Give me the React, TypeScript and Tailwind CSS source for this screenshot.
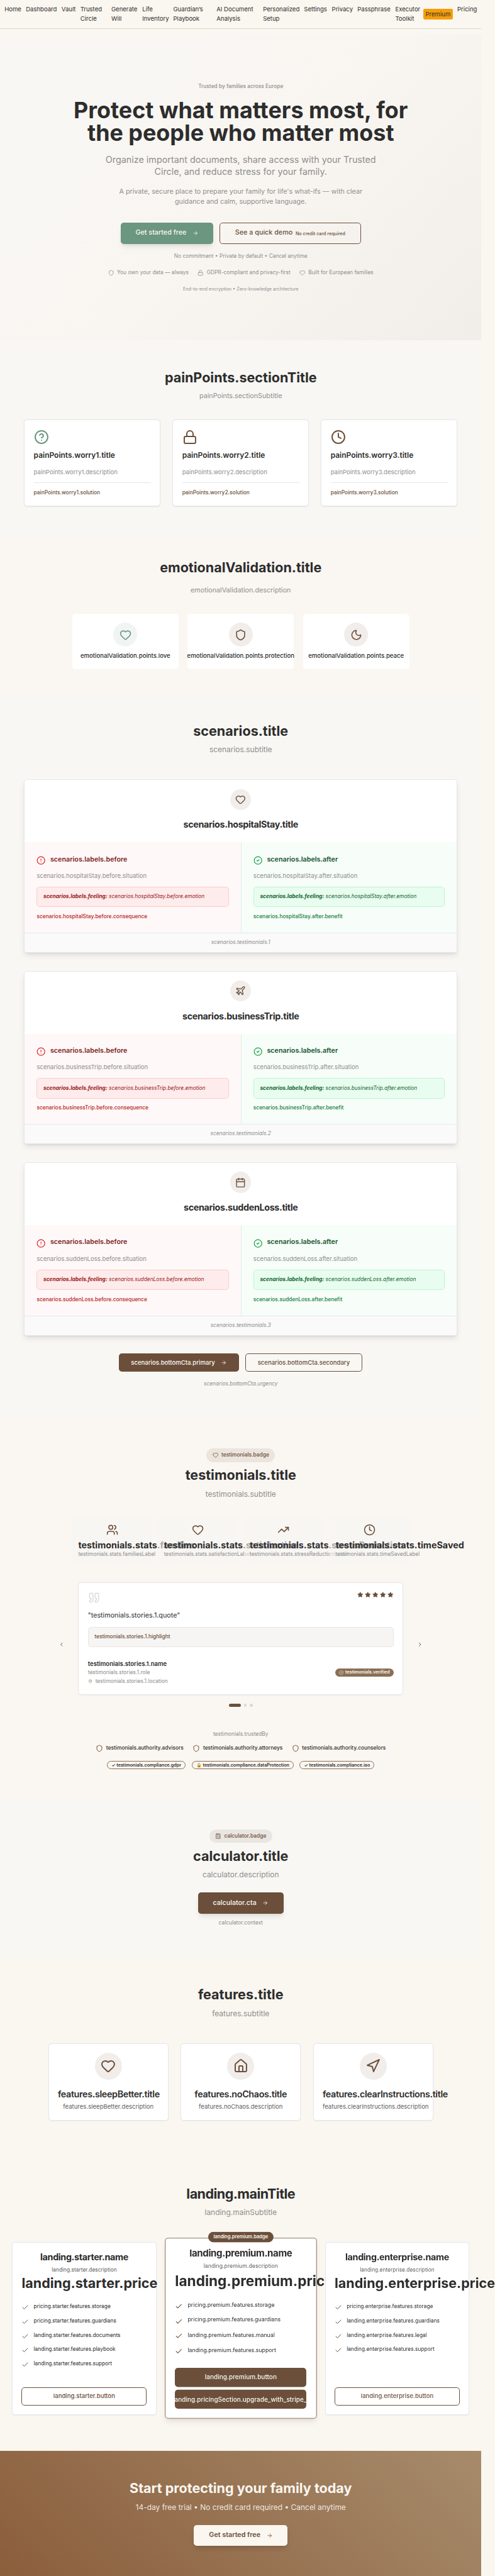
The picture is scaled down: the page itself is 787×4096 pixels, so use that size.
import type { ReactNode } from "react";
import {
  ArrowRight,
  Calculator,
  Calendar,
  Check,
  ChevronLeft,
  ChevronRight,
  CircleAlert,
  CircleCheck,
  CircleCheckBig,
  CircleHelp,
  Clock,
  Heart,
  House,
  Lock,
  MapPin,
  Moon,
  Navigation,
  Plane,
  Quote,
  Shield,
  Star,
  TrendingUp,
  Users,
  type LucideIcon,
} from "lucide-react";

const navItems: { label: string; width: string; badge?: string }[] = [
  { label: "Home", width: "w-[2.8rem]" },
  { label: "Dashboard", width: "w-[5.175rem]" },
  { label: "Vault", width: "w-[2.375rem]" },
  { label: "Trusted Circle", width: "w-[4.4rem]" },
  { label: "Generate Will", width: "w-[4.4rem]" },
  { label: "Life Inventory", width: "w-[4.4rem]" },
  { label: "Guardian’s Playbook", width: "w-[6.44rem]" },
  { label: "AI Document Analysis", width: "w-[6.97rem]" },
  { label: "Personalized Setup", width: "w-[6.06rem]" },
  { label: "Settings", width: "w-[3.875rem]" },
  { label: "Privacy", width: "w-[3.5rem]" },
  { label: "Passphrase", width: "w-[5.55rem]" },
  { label: "Executor Toolkit", width: "w-[4.15rem]", badge: "Premium" },
  { label: "Pricing", width: "w-[3.5rem]" },
];

function NavBar() {
  return (
    <nav className="mb-4 flex h-[4.7625rem] items-start gap-3 border-b border-[#dddad6] p-3 text-base leading-[1.6] text-[#2d2d2d]">
      {navItems.map((item) => (
        <div key={item.label} className="flex shrink-0 items-center">
          <a className={item.width}>{item.label}</a>
          {item.badge && (
            <span className="ml-2 flex w-[4.9rem] justify-center rounded-sm bg-[#f59e0b] py-0.5">{item.badge}</span>
          )}
        </div>
      ))}
    </nav>
  );
}

function Hero() {
  const points: [LucideIcon, string][] = [
    [Shield, "You own your data — always"],
    [Lock, "GDPR-compliant and privacy-first"],
    [Heart, "Built for European families"],
  ];
  return (
    <section className="flex h-203 flex-col items-center bg-[linear-gradient(135deg,#f8f7f3_0%,#f9f6f2_50%,#f1eeea_100%)] pt-32 text-center text-[#8e8e8c]">
      <p className="text-sm font-medium">Trusted by families across Europe</p>
      <h1 className="mt-6 w-240 text-6xl leading-none font-bold text-[#2d2d2d]">
        Protect what matters most, for
        <br />
        the people who matter most
      </h1>
      <p className="mt-6 w-192 text-2xl">
        Organize important documents, share access with your Trusted Circle, and reduce stress for your family.
      </p>
      <p className="mt-6 w-168 text-lg leading-7">
        A private, secure place to prepare your family for life's what-ifs — with clear guidance and calm, supportive
        language.
      </p>
      <div className="mt-10 flex gap-4">
        <button className="flex h-14 items-center rounded-lg bg-[#6b9680] px-10 text-lg font-medium text-[#faf8f4] shadow-[0_0.6rem_0.95rem_-0.2rem_#0000001a,0_0.25rem_0.4rem_-0.25rem_#0000001a]">
          Get started free
          <ArrowRight className="ml-4 size-4" />
        </button>
        <button className="flex h-14 items-center rounded-lg border-[0.125rem] border-[#6b4f3a] px-10 text-lg font-medium text-[#6b4f3a]">
          See a quick demo
          <span className="ml-2 pt-1 text-xs font-medium">No credit card required</span>
        </button>
      </div>
      <p className="mt-6 text-sm">No commitment • Private by default • Cancel anytime</p>
      <div className="mt-6 flex gap-6">
        {points.map(([Icon, text]) => (
          <div key={text} className="flex items-center gap-2 text-sm">
            <Icon className="size-4" />
            {text}
          </div>
        ))}
      </div>
      <p className="mt-6 text-xs">End-to-end encryption • Zero-knowledge architecture</p>
    </section>
  );
}

function Heading({
  title,
  subtitle,
  large,
  tight,
}: {
  title: string;
  subtitle: string;
  large?: boolean;
  tight?: boolean;
}) {
  return (
    <div className="text-center">
      <h2
        className={
          tight ? "text-4xl font-bold tracking-tight text-[#2d2d2d]" : "text-4xl font-bold text-[#2d2d2d]"
        }
      >
        {title}
      </h2>
      <p className={large ? "mt-4 text-xl text-[#8e8e8c]" : "mt-4 text-lg leading-7 text-[#8e8e8c]"}>{subtitle}</p>
    </div>
  );
}

function PainPoints() {
  const cards: [string, LucideIcon, string][] = [
    ["worry1", CircleHelp, "text-[#6b9680]"],
    ["worry2", Lock, "text-[#6b4f3a]"],
    ["worry3", Clock, "text-[#6b4f3a]"],
  ];
  return (
    <section className="h-[32.65rem] bg-[#f8f7f3] px-16 pt-20">
      <Heading title="painPoints.sectionTitle" subtitle="painPoints.sectionSubtitle" />
      <div className="mt-12 grid grid-cols-3 gap-8">
        {cards.map(([key, Icon, color]) => (
          <div
            key={key}
            className="h-[14.4rem] rounded-lg border-[0.125rem] border-[#e5e7eb] bg-white p-6 shadow-[0_0.06rem_0.15rem_#00000014]"
          >
            <Icon className={`size-10 ${color}`} />
            <h3 className="mt-4 text-xl font-semibold text-[#2d2d2d]">{`painPoints.${key}.title`}</h3>
            <p className="mt-4 text-base leading-[1.6] text-[#8e8e8c]">{`painPoints.${key}.description`}</p>
            <p className="mt-4 border-t border-[#e5e7eb] pt-4 text-sm font-medium text-[#6b4f3a]">
              {`painPoints.${key}.solution`}
            </p>
          </div>
        ))}
      </div>
    </section>
  );
}

function EmotionalValidation() {
  const cards: [string, LucideIcon, string][] = [
    ["love", Heart, "bg-[#f0f4f2] text-[#6b9680]"],
    ["protection", Shield, "bg-[#f1edea] text-[#6b4f3a]"],
    ["peace", Moon, "bg-[#f1edea] text-[#6b4f3a]"],
  ];
  return (
    <section className="h-[26.1rem] bg-[#faf6f2] px-48 pt-16">
      <h2 className="text-center text-4xl font-bold text-[#2d2d2d]">emotionalValidation.title</h2>
      <p className="mt-6 text-center text-lg leading-[1.625] text-[#8e8e8c]">emotionalValidation.description</p>
      <div className="mt-12 grid grid-cols-3 gap-6">
        {cards.map(([key, Icon, tone]) => (
          <div key={key} className="flex min-w-0 flex-col items-center rounded-lg bg-white p-6">
            <div className={`flex size-16 items-center justify-center rounded-full ${tone}`}>
              <Icon className="size-8" />
            </div>
            <p className="mt-3 text-base font-medium text-[#2d2d2d]">{`emotionalValidation.points.${key}`}</p>
          </div>
        ))}
      </div>
    </section>
  );
}

function Outcome({ scenario, after }: { scenario: string; after?: boolean }) {
  const phase = after ? "after" : "before";
  const Icon = after ? CircleCheck : CircleAlert;
  return (
    <div className={after ? "border-l border-[#e3ece6] bg-[#f7fdf9] p-8" : "bg-[#fef8f8] p-8"}>
      <div className="flex items-start gap-3">
        <Icon className={after ? "mt-1 size-6 text-[#16a34a]" : "mt-1 size-6 text-[#dc2626]"} />
        <h4
          className={
            after ? "text-lg leading-7 font-semibold text-[#14532d]" : "text-lg leading-7 font-semibold text-[#7f1d1d]"
          }
        >
          {`scenarios.labels.${phase}`}
        </h4>
      </div>
      <p className="mt-4 text-base leading-[1.625] text-[#8e8e8c]">{`scenarios.${scenario}.${phase}.situation`}</p>
      <p
        className={
          after
            ? "mt-4 flex h-[3.375rem] items-center rounded-lg border border-[#bbf7d0] bg-[#e8fdef] px-4 text-sm text-[#166534] italic"
            : "mt-4 flex h-[3.375rem] items-center rounded-lg border border-[#fecaca] bg-[#feecec] px-4 text-sm text-[#991b1b] italic"
        }
      >
        <span>
          <strong className="font-bold">scenarios.labels.feeling:</strong> {`scenarios.${scenario}.${phase}.emotion`}
        </span>
      </p>
      <p className={after ? "mt-4 text-sm font-medium text-[#15803d]" : "mt-4 text-sm font-medium text-[#b91c1c]"}>
        {`scenarios.${scenario}.${phase}.${after ? "benefit" : "consequence"}`}
      </p>
    </div>
  );
}

function Scenarios() {
  const cards: [string, LucideIcon][] = [
    ["hospitalStay", Heart],
    ["businessTrip", Plane],
    ["suddenLoss", Calendar],
  ];
  return (
    <section className="h-[120.4375rem] bg-[#f8f7f3] px-16 pt-20">
      <Heading title="scenarios.title" subtitle="scenarios.subtitle" large />
      <div className="mt-16 flex flex-col gap-12">
        {cards.map(([key, Icon], index) => (
          <article
            key={key}
            className="flex h-[28.8125rem] flex-col overflow-hidden rounded-lg border border-[#e5e7eb] bg-white shadow-[0_0.6rem_0.95rem_-0.2rem_#0000001a,0_0.25rem_0.4rem_-0.25rem_#0000001a]"
          >
            <div className="flex h-[10.375rem] shrink-0 flex-col items-center pt-6">
              <div className="flex size-14 items-center justify-center rounded-full bg-[#f1edea] text-[#6b4f3a]">
                <Icon className="size-7" />
              </div>
              <h3 className="mt-5.5 text-2xl font-bold tracking-tight text-[#2d2d2d]">{`scenarios.${key}.title`}</h3>
            </div>
            <div className="grid h-60 shrink-0 grid-cols-2">
              <Outcome scenario={key} />
              <Outcome scenario={key} after />
            </div>
            <p className="flex grow items-center justify-center border-t border-[#e2e8f0] bg-[#fafafa] text-sm text-[#8e8e8c] italic">
              {`scenarios.testimonials.${index + 1}`}
            </p>
          </article>
        ))}
      </div>
      <div className="mt-12 flex justify-center gap-4">
        <button className="flex h-12 items-center rounded-lg bg-[#6b4f3a] px-8 text-base font-medium text-[#faf8f4]">
          scenarios.bottomCta.primary
          <ArrowRight className="ml-4 size-4" />
        </button>
        <button className="flex h-12 items-center rounded-lg border border-[#6b4f3a] px-8 text-base font-medium text-[#6b4f3a]">
          scenarios.bottomCta.secondary
        </button>
      </div>
      <p className="mt-6 text-center text-sm text-[#8e8e8c] italic">scenarios.bottomCta.urgency</p>
    </section>
  );
}

function Badge({ icon: Icon, children }: { icon: LucideIcon; children: ReactNode }) {
  return (
    <div className="mx-auto mb-4 flex h-9 w-fit items-center gap-2 rounded-full bg-[#6b4f3a]/10 px-4 text-sm font-medium text-[#6b4f3a]">
      <Icon className="size-4" />
      {children}
    </div>
  );
}

function Testimonials() {
  const stats: [string, LucideIcon][] = [
    ["families", Users],
    ["satisfaction", Heart],
    ["stressReduction", TrendingUp],
    ["timeSaved", Clock],
  ];
  return (
    <section className="h-[63.3125rem] bg-[#faf6f1] px-48 pt-20">
      <Badge icon={Heart}>testimonials.badge</Badge>
      <Heading title="testimonials.title" subtitle="testimonials.subtitle" large />
      <div className="mt-12 grid grid-cols-4 gap-4">
        {stats.map(([key, Icon]) => (
          <div key={key} className="relative h-31 min-w-0 rounded-lg bg-[#f7f6f5]/60 p-4">
            <Icon className="mx-auto size-8 text-[#6b4f3a]" />
            <p className="mt-2 text-2xl font-bold text-[#2d2d2d]">{`testimonials.stats.${key}`}</p>
            <p className="text-sm text-[#8e8e8c]">{`testimonials.stats.${key}Label`}</p>
          </div>
        ))}
      </div>

      <div className="mt-12 flex items-center justify-between">
        <div className="-ml-12 flex size-10 shrink-0 items-center justify-center">
          <ChevronLeft className="size-4 text-[#2d2d2d]" />
        </div>
        <div className="w-216 shrink-0">
          <article className="h-[18.6875rem] rounded-lg border border-[#e8e6e6] bg-white p-6 shadow-[0_0.06rem_0.12rem_#0000000d]">
            <div className="flex items-start justify-between">
              <Quote className="size-8 text-[#6b4f3a]/20" />
              <div className="flex gap-1 text-[#6b4f3a]">
                {[1, 2, 3, 4, 5].map((n) => (
                  <Star key={n} className="size-4 fill-current" />
                ))}
              </div>
            </div>
            <p className="mt-4 text-lg leading-[1.625] text-[#2d2d2d]">"testimonials.stories.1.quote"</p>
            <p className="mt-4 flex h-[3.375rem] items-center rounded-lg border border-[#e8e6e5] bg-[#f7f5f4] px-4 text-sm font-medium text-[#6b4f3a]">
              testimonials.stories.1.highlight
            </p>
            <div className="mt-8 flex items-center justify-between">
              <div className="text-sm text-[#8e8e8c]">
                <p className="text-base leading-[1.6] font-semibold text-[#2d2d2d]">testimonials.stories.1.name</p>
                <p>testimonials.stories.1.role</p>
                <p className="mt-1 flex items-center gap-2">
                  <MapPin className="size-3" />
                  testimonials.stories.1.location
                </p>
              </div>
              <span className="flex h-[1.375rem] items-center gap-1 rounded-full bg-[#8b6f55] px-2.5 text-xs font-semibold text-[#faf8f4]">
                <CircleCheckBig className="size-3" />
                testimonials.verified
              </span>
            </div>
          </article>
          <div className="mt-6 flex justify-center gap-2">
            <span className="h-2 w-8 rounded-full bg-[#6b4f3a]" />
            <span className="size-2 rounded-full bg-[#dad8d4]" />
            <span className="size-2 rounded-full bg-[#dad8d4]" />
          </div>
        </div>
        <div className="-mr-12 flex size-10 shrink-0 items-center justify-center">
          <ChevronRight className="size-4 text-[#2d2d2d]" />
        </div>
      </div>

      <p className="mt-16 text-center text-sm text-[#8e8e8c]">testimonials.trustedBy</p>
      <div className="mt-4 flex justify-center gap-6">
        {["advisors", "attorneys", "counselors"].map((key) => (
          <div key={key} className="flex items-center gap-2 text-sm font-medium text-[#2d2d2d]">
            <Shield className="size-5 text-[#6b4f3a]" />
            {`testimonials.authority.${key}`}
          </div>
        ))}
      </div>
      <div className="mt-6 flex justify-center gap-4 text-xs font-semibold text-[#2d2d2d]">
        {["✓ testimonials.compliance.gdpr", "🔒 testimonials.compliance.dataProtection", "✓ testimonials.compliance.iso"].map(
          (label) => (
            <span key={label} className="flex h-[1.375rem] items-center rounded-full border border-[#8b6f55] px-2.5">
              {label}
            </span>
          ),
        )}
      </div>
    </section>
  );
}

function CalculatorPromo() {
  return (
    <section className="h-105 bg-[#f8f7f3] pt-20">
      <Badge icon={Calculator}>calculator.badge</Badge>
      <Heading title="calculator.title" subtitle="calculator.description" large />
      <button className="mx-auto mt-8 flex h-14 items-center rounded-lg bg-[#6b4f3a] px-10 text-lg font-medium text-[#faf8f4] shadow-[0_0.6rem_0.95rem_-0.2rem_#0000001a,0_0.25rem_0.4rem_-0.25rem_#0000001a]">
        calculator.cta
        <ArrowRight className="ml-4 size-4" />
      </button>
      <p className="mt-4 text-center text-sm text-[#8e8e8c]">calculator.context</p>
    </section>
  );
}

function Features() {
  const cards: [string, LucideIcon][] = [
    ["sleepBetter", Heart],
    ["noChaos", House],
    ["clearInstructions", Navigation],
  ];
  return (
    <section className="h-[32.125rem] px-32 pt-20">
      <Heading title="features.title" subtitle="features.subtitle" large />
      <div className="mt-16 grid grid-cols-3 gap-8">
        {cards.map(([key, Icon]) => (
          <div
            key={key}
            className="h-[12.875rem] min-w-0 rounded-lg border border-[#e5e7eb] bg-white p-6 text-center shadow-[0_0.06rem_0.12rem_#0000000d]"
          >
            <div className="mx-auto flex size-18 items-center justify-center rounded-full bg-[#f1edea] text-[#6b4f3a]">
              <Icon className="size-10" />
            </div>
            <h3 className="mt-5.5 text-2xl font-semibold tracking-tight text-[#2d2d2d]">{`features.${key}.title`}</h3>
            <p className="mt-1.5 text-base text-[#5e5e5e]">{`features.${key}.description`}</p>
          </div>
        ))}
      </div>
    </section>
  );
}

type Plan = { key: string; features: string[]; featured?: boolean };

const plans: Plan[] = [
  {
    key: "starter",
    features: [
      "pricing.starter.features.storage",
      "pricing.starter.features.guardians",
      "landing.starter.features.documents",
      "landing.starter.features.playbook",
      "landing.starter.features.support",
    ],
  },
  {
    key: "premium",
    featured: true,
    features: [
      "pricing.premium.features.storage",
      "pricing.premium.features.guardians",
      "landing.premium.features.manual",
      "landing.premium.features.support",
    ],
  },
  {
    key: "enterprise",
    features: [
      "pricing.enterprise.features.storage",
      "landing.enterprise.features.guardians",
      "landing.enterprise.features.legal",
      "landing.enterprise.features.support",
    ],
  },
];

function PlanCard({ plan }: { plan: Plan }) {
  return (
    <article
      className={
        plan.featured
          ? "relative flex h-[28.6875rem] min-w-0 scale-105 flex-col rounded-lg border border-[#8f7a69] bg-white p-6 shadow-[0_0.6rem_0.95rem_-0.2rem_#6b4f3a22,0_0.25rem_0.4rem_-0.25rem_#6b4f3a1a]"
          : "relative flex h-[28.6875rem] min-w-0 flex-col rounded-lg border border-[#e2e8f0] bg-white p-6 shadow-[0_0.06rem_0.12rem_#0000000d]"
      }
    >
      {plan.featured && (
        <span className="absolute -top-4 left-1/2 flex h-6.5 -translate-x-1/2 items-center rounded-full bg-[#6b4f3a] px-3.5 text-xs font-semibold text-[#faf8f4]">
          landing.premium.badge
        </span>
      )}
      <h3 className="text-center text-2xl leading-7 font-bold tracking-tight text-[#2d2d2d]">{`landing.${plan.key}.name`}</h3>
      <p className="mt-2.5 text-center text-sm text-[#5e5e5e]">{`landing.${plan.key}.description`}</p>
      <p className="mt-1.5 text-center text-4xl font-bold text-[#2d2d2d]">{`landing.${plan.key}.price`}</p>
      <ul className="mt-8 flex flex-col gap-4">
        {plan.features.map((feature) => (
          <li key={feature} className="flex h-5.5 items-start gap-3 text-sm text-[#2d2d2d]">
            <Check className="mt-0.5 size-5 text-[#6b4f3a]" />
            {feature}
          </li>
        ))}
      </ul>
      <div className="mt-auto flex flex-col gap-2 text-base font-medium">
        {plan.featured ? (
          <>
            <button className="flex h-12 items-center justify-center rounded-lg bg-[#6b4f3a] text-[#faf8f4]">
              landing.premium.button
            </button>
            <button className="flex h-12 items-center justify-center overflow-hidden rounded-lg bg-[#6b4f3a] whitespace-nowrap text-[#faf8f4]">
              landing.pricingSection.upgrade_with_stripe_1
            </button>
          </>
        ) : (
          <button className="flex h-12 items-center justify-center rounded-lg border border-[#6b4f3a] text-[#6b4f3a]">
            {`landing.${plan.key}.button`}
          </button>
        )}
      </div>
    </article>
  );
}

function Pricing() {
  return (
    <section className="h-[49.9375rem] px-8 pt-24">
      <Heading title="landing.mainTitle" subtitle="landing.mainSubtitle" large tight />
      <div className="mt-16 grid grid-cols-3 gap-8">
        {plans.map((plan) => (
          <PlanCard key={plan.key} plan={plan} />
        ))}
      </div>
    </section>
  );
}

function ClosingCta() {
  return (
    <section className="flex h-83 flex-col items-center bg-[linear-gradient(45deg,#8b5e3c,#a68b6b)] pt-20 text-center text-[#faf6f0]">
      <h2 className="text-4xl font-bold">Start protecting your family today</h2>
      <p className="mt-4 text-xl text-[#faf6f0]/90">14-day free trial • No credit card required • Cancel anytime</p>
      <button className="mt-8 flex h-14 items-center rounded-lg bg-[#faf6f0] px-10 text-lg font-semibold text-[#6b4f3a] shadow-[0_0.6rem_0.95rem_-0.2rem_#00000022,0_0.25rem_0.4rem_-0.25rem_#00000022]">
        Get started free
        <ArrowRight className="ml-4 size-4" />
      </button>
    </section>
  );
}

export default function App() {
  return (
    <>
      <style>{`:root { font-size: 9.5685px; }`}</style>
      <div className="h-[4096px] w-full overflow-hidden bg-[#faf6f0] font-['Inter','Liberation_Sans',sans-serif]">
        <div className="w-320">
          <NavBar />
          <Hero />
          <PainPoints />
          <EmotionalValidation />
          <Scenarios />
          <Testimonials />
          <CalculatorPromo />
          <Features />
          <Pricing />
          <ClosingCta />
        </div>
      </div>
    </>
  );
}
